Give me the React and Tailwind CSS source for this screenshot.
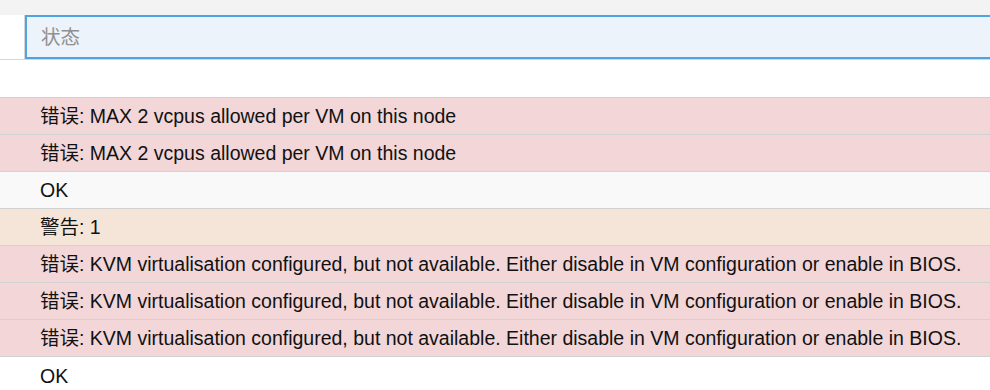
const rows = [
  { type: "error", text: "错误: MAX 2 vcpus allowed per VM on this node" },
  { type: "error", text: "错误: MAX 2 vcpus allowed per VM on this node" },
  { type: "ok", text: "OK" },
  { type: "warning", text: "警告: 1" },
  { type: "error", text: "错误: KVM virtualisation configured, but not available. Either disable in VM configuration or enable in BIOS." },
  { type: "error", text: "错误: KVM virtualisation configured, but not available. Either disable in VM configuration or enable in BIOS." },
  { type: "error", text: "错误: KVM virtualisation configured, but not available. Either disable in VM configuration or enable in BIOS." },
];

export default function App() {
  const getRowBg = (type) => {
    if (type === "error") return "bg-[#f2d6d8]";
    if (type === "warning") return "bg-[#f5e5d8]";
    return "bg-[#f9f9f9]";
  };

  return (
    <div className="w-[990px] h-[390px] overflow-hidden bg-white text-[19.5px] text-[#111] font-['Liberation_Sans','Noto_Sans_CJK_SC',sans-serif]">
      <div className="h-[15px] bg-[#f3f3f3]" />
      <div className="flex h-[45px] border-b border-[#d6d6d6]">
        <div className="w-[25px] border-r border-[#d6d6d6] bg-white" />
        <div className="flex-1 flex items-center pl-[14px] pt-[2px] bg-[#ecf3fa] border-y-2 border-l-2 border-[#4ea3e2] text-[#909090]">
          状态
        </div>
      </div>
      <div className="h-[37px]" />
      <div className="border-t border-[#d2d2d2]">
        {rows.map((row, idx) => (
          <div
            key={idx}
            className={`h-[37px] flex items-center pl-[40px] pt-[2px] border-b border-[#d2d2d2] ${getRowBg(row.type)}`}
          >
            {row.text}
          </div>
        ))}
        <div className="h-[37px] flex items-center pl-[40px] pt-[2px] bg-white">OK</div>
      </div>
    </div>
  );
}
